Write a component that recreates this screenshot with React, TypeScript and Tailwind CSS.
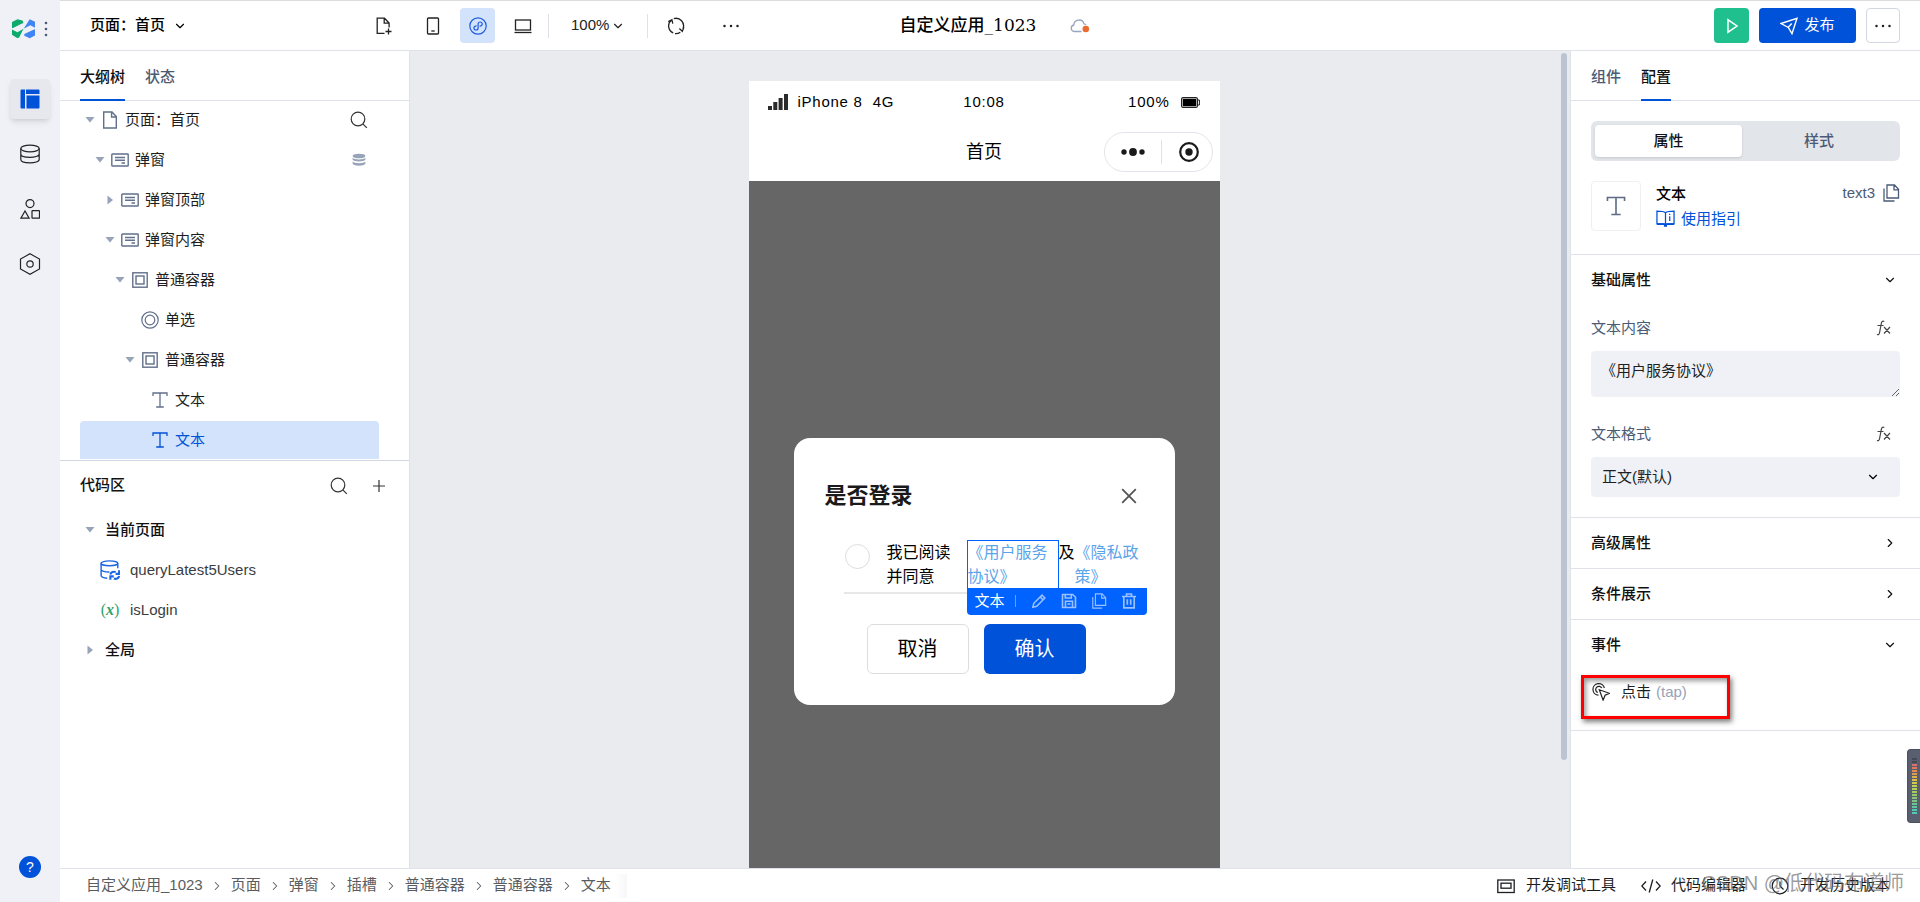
import React from "react";
import clsx from "clsx";
import { ChevronDown, ChevronRight } from "lucide-react";

type IconProps = { className?: string };

function Svg({ className, box = 20, sw = 1.2, children }: { className?: string; box?: number; sw?: number; children: React.ReactNode }) {
  return (
    <svg className={clsx("shrink-0", className)} viewBox={`0 0 ${box} ${box}`} fill="none" stroke="currentColor" strokeWidth={sw} aria-hidden>
      {children}
    </svg>
  );
}

/* ---------- icons ---------- */

const SearchIcon = ({ className }: IconProps) => (
  <Svg className={className} box={18}>
    <circle cx="8" cy="8" r="6.8" />
    <path d="M12.8 12.8l4 4" />
  </Svg>
);

const PageIcon = ({ className }: IconProps) => (
  <Svg className={className} box={18} sw={1.4}>
    <path d="M2.7 1h8.3l4.3 4.6V17H2.7zM10.6 1v5h4.7" />
  </Svg>
);

const SlotIcon = ({ className }: IconProps) => (
  <Svg className={className} box={18} sw={1.4}>
    <rect x=".8" y="3" width="16.4" height="12" rx=".6" />
    <path d="M4 6.5h10M4 9.3h10M10.5 12h3.5" />
  </Svg>
);

const BoxIcon = ({ className }: IconProps) => (
  <Svg className={className} box={18} sw={1.4}>
    <rect x="1.8" y="1.8" width="14.4" height="14.4" />
    <rect x="5" y="5" width="8" height="8" />
  </Svg>
);

const RadioIcon = ({ className }: IconProps) => (
  <Svg className={className} box={18} sw={1.2}>
    <circle cx="9" cy="9" r="8.2" />
    <circle cx="9" cy="9" r="4.8" />
  </Svg>
);

const TextIcon = ({ className }: IconProps) => (
  <Svg className={className} box={18} sw={1.3}>
    <path d="M2 5V2h14v3M9 2v14M5.2 16h7.6" />
  </Svg>
);

const StackIcon = ({ className }: IconProps) => (
  <svg className={clsx("shrink-0", className)} viewBox="0 0 14 14" fill="currentColor" aria-hidden>
    <ellipse cx="7" cy="3" rx="6.4" ry="2.3" />
    <path d="M.6 4.8c1.4 2.2 11.4 2.2 12.8 0v2c-1.4 2.3-11.4 2.3-12.8 0z" />
    <path d="M.6 8.6c1.4 2.2 11.4 2.2 12.8 0v2c-1.4 2.9-11.4 2.9-12.8 0z" />
  </svg>
);

const CopyIcon = ({ className }: IconProps) => (
  <Svg className={className} box={18} sw={1.3}>
    <path d="M5 1h7.5l4 4.2V14H5zM12 1v4.8h4.5M2 4.5V17h10.5" />
  </Svg>
);

const LogoIcon = ({ className }: IconProps) => (
  <svg className={clsx("shrink-0", className)} viewBox="0 0 24 20" aria-hidden>
    <path d="M0 3L5.500.3l5 1.300 1 2.400-2.500 1L1 9H0zM0 10.500l5.500 2.800 6-3.600L7 18.700 5 19 0 15.700z" fill="#0cab6c" />
    <path d="M11.700 9.700L17.700.2 23 2.800v6l-4.700-2.600zM12.300 15l9.700-4.400 1-.3v6.200L17.700 19.300l-5.400-2.500z" fill="#3f85f3" />
  </svg>
);

const LayoutIcon = ({ className }: IconProps) => (
  <svg className={clsx("shrink-0", className)} viewBox="0 0 20 20" fill="#0052d9" aria-hidden>
    <path d="M1.5.5H5v19H1.500a1 1 0 0 1-1-1v-17a1 1 0 0 1 1-1z" />
    <path d="M6 .5h12.500a1 1 0 0 1 1 1V5H6zM6.500 6.500h13v12a1 1 0 0 1-1 1h-12z" />
  </svg>
);

const DatabaseIcon = ({ className }: IconProps) => (
  <Svg className={className}>
    <ellipse cx="10" cy="4.500" rx="9.200" ry="3.300" />
    <path d="M.8 4.500v11c0 4.400 18.400 4.400 18.400 0v-11M.8 10c0 4.400 18.400 4.400 18.400 0" />
  </Svg>
);

const ShapesIcon = ({ className }: IconProps) => (
  <Svg className={className}>
    <circle cx="10" cy="4.600" r="4" />
    <path d="M5 12L.9 19.200h8.200z" />
    <rect x="12" y="11.700" width="7.500" height="7.500" rx=".5" />
  </Svg>
);

const HexIcon = ({ className }: IconProps) => (
  <Svg className={className} box={22}>
    <path d="M11 .8l9.500 5.200v10L11 21.200 1.500 16V6z" />
    <circle cx="11" cy="11" r="3.200" />
  </Svg>
);

const PageAddIcon = ({ className }: IconProps) => (
  <Svg className={className} box={18} sw={1.300}>
    <path d="M9.500 16.300H2.200V1.200h7.300l4.600 4.800v4.500M9.200 1.200v5h4.800M13.500 11.500v6M10.500 14.500h6" />
  </Svg>
);

const MobileIcon = ({ className }: IconProps) => (
  <Svg className={className} box={18} sw={1.300}>
    <rect x="3.500" y="1" width="11" height="16" rx="1" />
    <path d="M7.300 14h3.400" />
  </Svg>
);

const MiniProgramIcon = ({ className }: IconProps) => (
  <Svg className={className} box={18}>
    <circle cx="9" cy="9" r="8.200" />
    <path d="M10.600 9.200c1.500-.2 2.600-1 2.600-2.300 0-1.100-.9-1.900-2-1.900S9.100 5.900 9.100 7v4c0 1.100-.9 2-2.100 2s-2.100-.8-2.100-1.900c0-1.300 1.100-2.100 2.600-2.300" />
  </Svg>
);

const LaptopIcon = ({ className }: IconProps) => (
  <Svg className={className} box={18} sw={1.300}>
    <rect x="1.500" y="3" width="15" height="10" />
    <path d="M.5 15.500h17" />
  </Svg>
);

const RefreshIcon = ({ className }: IconProps) => (
  <Svg className={className} box={18} sw={1.300}>
    <path d="M6.200 15.900A7.600 7.600 0 0 1 4.600 2.900M1.300 4.600l3.600-1.900.9 4M6.800 1.600A7.600 7.600 0 0 1 16 11.700M8 16.600a7.600 7.600 0 0 0 5.300-1.400M16.900 10.200l-1.600 4.200-2.900-2.900" />
  </Svg>
);

const CloudIcon = ({ className }: IconProps) => (
  <svg className={clsx("shrink-0", className)} viewBox="0 0 20 16" fill="none" aria-hidden>
    <path d="M11.500 13.500H4.300a3.300 3.300 0 0 1-.5-6.500 5.200 5.200 0 0 1 10.200-1.200c.8.100 1.500.5 2 1.100" stroke="#99a5bd" strokeWidth="1.300" />
    <circle cx="15.800" cy="11" r="3.300" fill="#e86c30" />
  </svg>
);

const SendIcon = ({ className }: IconProps) => (
  <Svg className={className} box={18} sw={1.400}>
    <path d="M1 6.500L17 1.300l-5 15.400-3.700-6.300zM8.200 10.200l3.600-3.600" />
  </Svg>
);

const DotsIcon = ({ className }: IconProps) => (
  <svg className={clsx("shrink-0", className)} viewBox="0 0 18 18" fill="currentColor" aria-hidden>
    <circle cx="2.500" cy="9" r="1.250" />
    <circle cx="9" cy="9" r="1.250" />
    <circle cx="15.500" cy="9" r="1.250" />
  </svg>
);

const GuideIcon = ({ className }: IconProps) => (
  <Svg className={className} box={18} sw={1.200}>
    <path d="M9 3.500C7.500 2.200 4 2 .9 2v12H7l2 1.500L11 14h6.100V2C14 2 10.500 2.200 9 3.500zM9 3.500V15M13 6.800v4.500M13 4.600v1.200" />
    <path d="M1 14.300h16M7.500 15.800h3" strokeWidth="1.800" />
  </Svg>
);

const DataQueryIcon = ({ className }: IconProps) => (
  <Svg className={className} box={18} sw={1.300}>
    <ellipse cx="8.500" cy="3" rx="7.500" ry="2.200" />
    <path d="M1 3v11c0 1.300 2.500 2.200 5.500 2.400M16 3v4.500M1 8.500c0 1.400 3.500 2.400 7.500 2.300" />
    <path d="M9.300 13c.5-2 2.900-3 4.800-2.100M17.200 9.300v3.200h-3.200M17.300 14.500c-.5 2-2.900 3-4.800 2.100M9.300 17.800v-3.100h3.100" strokeWidth="1.900" />
  </Svg>
);

const TapIcon = ({ className }: IconProps) => (
  <Svg className={className} box={18} sw={1.200}>
    <path d="M6.500 12.200A5.800 5.800 0 1 1 12.400 5M5.800 9.500a3.200 3.200 0 1 1 4-4.400M7.300 6.800l10 3.500-4.200 2-2 4.800z" />
  </Svg>
);

const Caret = ({ open = true }: { open?: boolean }) => (
  <svg className="size-2.5 text-[#97a3b7]" viewBox="0 0 10 10" fill="currentColor" aria-hidden>
    {open ? <path d="M.5 2h9L5 7.500z" /> : <path d="M2.500.5v9L8 5z" />}
  </svg>
);

/* ---------- left side ---------- */

function SideNav() {
  const items = [
    { name: "设计", icon: <LayoutIcon className="size-5" /> },
    { name: "数据", icon: <DatabaseIcon className="size-5" /> },
    { name: "组件库", icon: <ShapesIcon className="size-5" /> },
    { name: "设置", icon: <HexIcon className="size-[22px]" /> },
  ];
  return (
    <nav className="flex w-[60px] shrink-0 flex-col items-center bg-[#f0f1f6] pb-6">
      <div className="flex h-[57px] w-full items-center gap-2 pl-3">
        <LogoIcon className="h-5 w-6" />
        <svg className="h-4 w-1 text-[#4b5b76]" viewBox="0 0 4 16" fill="currentColor" aria-hidden>
          <circle cx="2" cy="2" r="1.300" />
          <circle cx="2" cy="8" r="1.300" />
          <circle cx="2" cy="14" r="1.300" />
        </svg>
      </div>
      <div className="mt-[22px] flex flex-col gap-[15px]">
        {items.map((item, i) => (
          <button
            key={item.name}
            aria-label={item.name}
            className={clsx("flex size-10 items-center justify-center rounded-sm text-[#222]", i === 0 && "bg-[#e7e8ee] shadow-md")}
          >
            {item.icon}
          </button>
        ))}
      </div>
      <button aria-label="帮助" className="mt-auto flex size-[22px] items-center justify-center rounded-full bg-[#0052d9] text-sm text-white">
        ?
      </button>
    </nav>
  );
}

type TreeNode = { label: string; level: number; open?: boolean; icon: (p: IconProps) => React.ReactNode; selected?: boolean };

const tree: TreeNode[] = [
  { label: "页面：首页", level: 0, open: true, icon: PageIcon },
  { label: "弹窗", level: 1, open: true, icon: SlotIcon },
  { label: "弹窗顶部", level: 2, open: false, icon: SlotIcon },
  { label: "弹窗内容", level: 2, open: true, icon: SlotIcon },
  { label: "普通容器", level: 3, open: true, icon: BoxIcon },
  { label: "单选", level: 4, icon: RadioIcon },
  { label: "普通容器", level: 4, open: true, icon: BoxIcon },
  { label: "文本", level: 5, icon: TextIcon },
  { label: "文本", level: 5, icon: TextIcon, selected: true },
];

const indent = ["pl-0", "pl-[10px]", "pl-[20px]", "pl-[30px]", "pl-[40px]", "pl-[50px]"];

function PanelTab({ label, active = false }: { label: string; active?: boolean }) {
  return (
    <button className={clsx("-mb-px border-b-2 pt-1 font-medium", active ? "border-[#0052d9] text-[#111]" : "border-transparent text-[#4b5b76]")}>
      {label}
    </button>
  );
}

function OutlinePanel() {
  return (
    <aside className="flex w-[350px] shrink-0 flex-col border-r border-[#dfe2e8] bg-white">
      <div className="flex h-[50px] shrink-0 gap-5 border-b border-[#dfe2e8] px-5">
        <PanelTab label="大纲树" active />
        <PanelTab label="状态" />
      </div>

      <ul className="mr-[30px] ml-5 flex flex-col gap-0.5 pb-px">
        {tree.map((node, i) => {
          const Icon = node.icon;
          return (
            <li
              key={i}
              className={clsx("flex h-[38px] items-center rounded-t-sm pr-2.5", node.selected ? "bg-[#d3e3fc] text-[#0052d9]" : "text-[#1c1e22]")}
            >
              <div className={clsx("flex flex-1 items-center", indent[node.level])}>
                <span className="flex w-5 justify-center">{node.open !== undefined && <Caret open={node.open} />}</span>
                <span className={clsx("mr-[5px] flex w-5 justify-center", !node.selected && "text-[#62708a]")}>
                  <Icon className="size-[18px]" />
                </span>
                {node.label}
              </div>
              {i === 0 && (
                <button aria-label="搜索" className="flex w-5 justify-center text-[#333]">
                  <SearchIcon className="size-[18px]" />
                </button>
              )}
              {i === 1 && (
                <span className="flex w-5 justify-center text-[#97a3b7]">
                  <StackIcon className="size-3.5" />
                </span>
              )}
            </li>
          );
        })}
      </ul>

      <div className="border-t border-[#d3d7e2]">
        <div className="flex h-[49px] items-center pr-5 pl-5">
          <h2 className="flex-1 font-medium text-[#111]">代码区</h2>
          <button aria-label="搜索代码" className="mr-5 flex size-5 items-center justify-center text-[#333]">
            <SearchIcon className="size-[18px]" />
          </button>
          <button aria-label="新建" className="flex size-5 items-center justify-center text-[#333]">
            <Svg className="size-3" box={12}>
              <path d="M6 0v12M0 6h12" />
            </Svg>
          </button>
        </div>
        <ul className="pl-5 text-[#1c1e22]">
          <li className="flex h-10 items-center gap-[5px] font-medium text-[#111]">
            <span className="flex w-5 justify-center"><Caret /></span>
            当前页面
          </li>
          <li className="flex h-10 items-center gap-2.5 pl-5 text-[#3a3d42]">
            <DataQueryIcon className="size-5 text-[#1f66e5]" />
            queryLatest5Users
          </li>
          <li className="flex h-10 items-center gap-2.5 pl-5 text-[#3a3d42]">
            <span className="w-5 text-center font-[Liberation_Serif] text-base text-[#30a46c]">(<b><i>x</i></b>)</span>
            isLogin
          </li>
          <li className="flex h-10 items-center gap-[5px] font-medium text-[#111]">
            <span className="flex w-5 justify-center"><Caret open={false} /></span>
            全局
          </li>
        </ul>
      </div>
    </aside>
  );
}

/* ---------- top bar ---------- */

function TopBar() {
  const iconBtn = "flex size-[35px] items-center justify-center rounded-sm text-[#222]";
  return (
    <header className="grid h-[51px] shrink-0 grid-cols-[1fr_auto_1fr] items-center border-t border-b border-t-[#dcdcdc] border-b-[#dfe2e8] bg-white pr-5 pl-[30px]">
      <div className="flex items-center">
        <button className="flex w-[276px] items-center gap-2 font-medium text-black">
          页面：首页
          <ChevronDown className="size-3.5" strokeWidth={2} />
        </button>
        <button aria-label="新建页面" className={clsx(iconBtn, "mr-3.5")}><PageAddIcon className="size-[18px]" /></button>
        <div className="flex gap-2.5">
          <button aria-label="手机" className={iconBtn}><MobileIcon className="size-[18px]" /></button>
          <button aria-label="小程序" className="flex size-[35px] items-center justify-center rounded-sm bg-[#d3e3fc] text-[#1d5be0]">
            <MiniProgramIcon className="size-[18px]" />
          </button>
          <button aria-label="电脑" className={iconBtn}><LaptopIcon className="size-[18px]" /></button>
        </div>
        <span className="mr-[22px] ml-2 h-6 w-px bg-[#dfe2e8]" />
        <button className="flex items-center gap-0.5 text-[#222]">
          100%
          <ChevronDown className="size-3.5" strokeWidth={2} />
        </button>
        <span className="mr-2.5 ml-[22px] h-6 w-px bg-[#dfe2e8]" />
        <button aria-label="刷新" className={clsx(iconBtn, "mr-5")}><RefreshIcon className="size-[18px]" /></button>
        <button aria-label="更多" className={iconBtn}><DotsIcon className="size-[18px]" /></button>
      </div>

      <div className="flex items-center gap-[34px]">
        <h1 className="font-['DejaVu_Serif','Noto_Sans_CJK_SC',serif] text-[17px] font-medium text-black">自定义应用_1023</h1>
        <CloudIcon className="h-4 w-5" />
      </div>

      <div className="flex justify-end gap-2.5">
        <button aria-label="预览" className="flex size-[35px] items-center justify-center rounded-sm bg-[#1fc08e] text-white">
          <Svg className="size-4" box={16} sw={1.500}>
            <path d="M4 1.800v12.400L13 8z" />
          </Svg>
        </button>
        <button className="flex h-[35px] w-[97px] items-center justify-center gap-1.5 rounded-sm bg-[#0052d9] text-white">
          <SendIcon className="size-[18px]" />
          发布
        </button>
        <button aria-label="更多操作" className="flex h-[35px] w-[34px] items-center justify-center rounded-sm border border-[#d3d7e2] text-[#222]">
          <DotsIcon className="size-[18px]" />
        </button>
      </div>
    </header>
  );
}

/* ---------- canvas ---------- */

function SelectionToolbar() {
  const btn = "flex w-[30px] justify-center text-white/60";
  return (
    <div className="absolute top-full -left-px flex h-[27px] w-[180px] items-center rounded-b-sm bg-[#0062ff] pl-2 text-[15px] text-white">
      <span className="w-10">文本</span>
      <span className="mr-2 h-3 w-px bg-white/40" />
      <button aria-label="编辑" className={btn}>
        <Svg className="size-4" box={16} sw={1.500}>
          <path d="M1.800 14.200l1-3.900 8.200-8.200 2.900 2.900-8.200 8.200zM9.200 4l2.900 2.900" />
        </Svg>
      </button>
      <button aria-label="保存" className={btn}>
        <Svg className="size-4" box={16} sw={1.600}>
          <path d="M1.500 1.500h10.200l2.800 2.800v10.200h-13zM4.300 1.500V5h6V1.500M4.500 14.500V8.300h7v6.200M6.500 11h3" />
        </Svg>
      </button>
      <button aria-label="复制" className={btn}>
        <CopyIcon className="size-4" />
      </button>
      <button aria-label="删除" className={btn}>
        <Svg className="size-4" box={16} sw={1.700}>
          <path d="M1 3.500h14M5.500 3V1h5v2M2.800 3.500v11.300h10.400V3.500M6.300 6.300v5.500M9.700 6.300v5.500" />
        </Svg>
      </button>
    </div>
  );
}

function LoginDialog() {
  return (
    <div className="h-[267px] w-[381px] rounded-2xl bg-white px-[31px] pt-11 text-black">
      <div className="flex h-7 items-center justify-between pr-[7px]">
        <h3 className="text-[22px] font-bold text-[#1a1a1a]">是否登录</h3>
        <button aria-label="关闭" className="text-[#555]">
          <Svg className="size-4" box={16} sw={1.800}>
            <path d="M1.200 1.200l13.600 13.600M14.800 1.200L1.200 14.800" />
          </Svg>
        </button>
      </div>
      <div className="mt-[30px] ml-[19px] flex h-[54px] text-base leading-6">
        <label className="flex w-[123px] items-start border-b-2 border-[#e7e7e7] pt-px">
          <input type="radio" name="agree" className="mt-[3px] mr-[17px] ml-px size-[25px] shrink-0 appearance-none rounded-full border border-[#ddd]" />
          <span className="w-16">我已阅读并同意</span>
        </label>
        <div className="relative h-12 w-[92px] border border-b-0 border-[#0062ff] text-[#5ba4ea]">
          <a href="#service">《用户服务协议》</a>
          <SelectionToolbar />
        </div>
        <span className="w-4 pt-px">及</span>
        <a href="#privacy" className="w-16 pt-px text-[#5ba4ea]">《隐私政策》</a>
      </div>
      <div className="mt-[30px] ml-[42px] flex gap-[15px] text-xl">
        <button className="h-[50px] w-[102px] rounded-md border border-[#ddd]">取消</button>
        <button className="h-[50px] w-[102px] rounded-md bg-[#0052d9] text-white">确认</button>
      </div>
    </div>
  );
}

function Phone() {
  return (
    <div className="w-[471px] shrink-0">
      <div className="h-[100px] bg-white text-black">
        <div className="grid h-[42px] grid-cols-3 items-center px-[19px] text-[15px] tracking-wider">
          <div className="flex items-center gap-2.5">
            <svg className="h-4 w-5" viewBox="0 0 20 16" fill="#2b2b2b" aria-hidden>
              <path d="M0 12h4v4H0zM5.300 8h4v8h-4zM10.600 4h4v12h-4zM16 0h4v16h-4z" />
            </svg>
            <span className="whitespace-nowrap">iPhone 8</span>
            <span>4G</span>
          </div>
          <span className="text-center">10:08</span>
          <div className="flex items-center justify-end gap-3">
            <span>100%</span>
            <svg className="h-[11px] w-[19px]" viewBox="0 0 19 11" aria-hidden>
              <rect x=".6" y=".6" width="15.800" height="9.800" rx="1.500" fill="none" stroke="#222" strokeWidth="1.200" />
              <rect x="1.800" y="1.800" width="13.400" height="7.400" />
              <path d="M17 3h1.400v5H17" fill="none" stroke="#222" />
            </svg>
          </div>
        </div>
        <div className="grid h-[58px] grid-cols-[1fr_auto_1fr] items-center px-[7px]">
          <span />
          <span className="text-lg">首页</span>
          <div className="flex h-10 w-[109px] items-center justify-self-end rounded-full border border-[#e4e4ec] text-[#1a1a1a]">
            <button aria-label="菜单" className="flex w-14 justify-center">
              <svg className="h-2 w-6" viewBox="0 0 24 8" fill="currentColor" aria-hidden>
                <circle cx="3" cy="4" r="2.700" />
                <circle cx="12" cy="4" r="3.900" />
                <circle cx="21" cy="4" r="2.700" />
              </svg>
            </button>
            <span className="h-6 w-px bg-[#e0e0e8]" />
            <button aria-label="退出" className="flex flex-1 justify-center pl-1">
              <Svg className="size-5" sw={2.200}>
                <circle cx="10" cy="10" r="8.800" />
                <circle cx="10" cy="10" r="3.700" fill="currentColor" stroke="none" />
              </Svg>
            </button>
          </div>
        </div>
      </div>
      <div className="flex h-[780px] items-center justify-center bg-[#666]">
        <LoginDialog />
      </div>
    </div>
  );
}

function Canvas() {
  return (
    <main className="flex min-w-0 flex-1 overflow-hidden bg-[#eaebef]">
      <div className="flex flex-1 justify-center pt-[30px]">
        <Phone />
      </div>
      <div className="flex w-3 justify-center pt-0.5">
        <div className="h-[707px] w-1.5 rounded-full bg-[#bbc4d0]" />
      </div>
    </main>
  );
}

/* ---------- right side ---------- */

function SectionTitle({ title, open = false }: { title: string; open?: boolean }) {
  return (
    <button className="flex h-[50px] w-full items-center justify-between pr-[3px] font-medium text-[#111]">
      {title}
      {open ? <ChevronDown className="size-3.5" strokeWidth={2} /> : <ChevronRight className="size-3.5" strokeWidth={2} />}
    </button>
  );
}

function FieldLabel({ id, text }: { id: string; text: string }) {
  return (
    <div className="flex h-[22px] items-center justify-between pr-2 text-[#4b5b76]">
      <label htmlFor={id}>{text}</label>
      <button aria-label={`${text} 表达式`} className="text-[#444]">
        <Svg className="size-4" box={16} sw={1.200}>
          <path d="M8.300 1.500C6.200.6 5.500 2 5.200 4L3.600 12.500C3.200 14.500 2.200 15 1 14.500M1.500 5.500h6M8 7l6 6.500M14 7l-6 6.500" />
        </Svg>
      </button>
    </div>
  );
}

function ConfigPanel() {
  return (
    <aside className="relative w-[350px] shrink-0 border-l border-[#dfe2e8] bg-white">
      <div className="flex h-[50px] gap-5 border-b border-[#dfe2e8] px-5">
        <PanelTab label="组件" />
        <PanelTab label="配置" active />
      </div>

      <div className="border-b border-[#dfe2e8] px-5 pt-5 pb-[23px]">
        <div className="flex h-10 rounded-md bg-[#e2e5ea] p-1">
          <button className="w-[147px] rounded-sm bg-white font-medium text-[#111] shadow-sm">属性</button>
          <button className="flex-1 font-medium text-[#4b5b76]">样式</button>
        </div>
        <div className="mt-5 flex">
          <div className="flex size-[50px] items-center justify-center rounded-sm border border-[#eef0f3] text-[#5c6a84]">
            <TextIcon className="size-[22px]" />
          </div>
          <div className="ml-[15px] flex-1 leading-[25px]">
            <div className="font-medium text-black">文本</div>
            <a href="#guide" className="flex items-center gap-1.5 text-[#0052d9]">
              <GuideIcon className="size-[19px]" />
              使用指引
            </a>
          </div>
          <div className="flex h-6 items-center gap-[7px] text-[#4b5b76]">
            text3
            <button aria-label="复制名称"><CopyIcon className="size-[18px]" /></button>
          </div>
        </div>
      </div>

      <section className="border-b border-[#dfe2e8] px-5 pb-5">
        <SectionTitle title="基础属性" open />
        <div className="mt-3">
          <FieldLabel id="content" text="文本内容" />
          <textarea id="content" defaultValue="《用户服务协议》" className="mt-3 block h-[46px] w-full rounded-sm bg-[#f0f1f6] px-2.5 py-2 leading-6 text-[#1c1e22]" />
        </div>
        <div className="mt-[26px]">
          <FieldLabel id="format" text="文本格式" />
          <div className="relative mt-3">
            <select id="format" className="block h-10 w-full appearance-none rounded-sm bg-[#f0f1f6] pl-[11px] text-[#1c1e22]">
              <option>正文(默认)</option>
            </select>
            <ChevronDown className="pointer-events-none absolute top-[13px] right-5 size-3.5" strokeWidth={2} />
          </div>
        </div>
      </section>

      <section className="border-b border-[#dfe2e8] px-5"><SectionTitle title="高级属性" /></section>
      <section className="border-b border-[#dfe2e8] px-5"><SectionTitle title="条件展示" /></section>
      <section className="border-b border-[#dfe2e8] px-5 pb-[11px]">
        <SectionTitle title="事件" open />
        <div className="mt-[5px] -ml-2.5 h-11 w-[149px] border-3 border-[#f00] shadow-[2px_3px_5px_rgba(0,0,0,0.5),inset_2px_3px_5px_rgba(0,0,0,0.4)]">
          <button className="flex h-7 items-center pl-2">
            <TapIcon className="mr-[11px] size-[18px] text-[#222]" />
            <span className="text-[#1c1e22]">点击</span>
            <span className="ml-[5px] text-[#97a3b7]">(tap)</span>
          </button>
        </div>
      </section>

      <LevelMeter />
    </aside>
  );
}

const meterColors = ["#444a55", "#444a55", "#d8716b", "#dd7a5e", "#e08a55", "#e39a4e", "#dcb04e", "#d8be4c", "#d2c84c", "#c4cf52", "#b4d058", "#a5cd62", "#96cb6c", "#88c877", "#7cc583", "#6fc490", "#60c69d", "#52c8ac", "#4fcbb8"];

function LevelMeter() {
  return (
    <div className="absolute right-0 bottom-[45px] flex h-[74px] w-[13px] flex-col items-center gap-px rounded-l-sm border border-r-0 border-[#4b505e] bg-[#5a5f6f] pt-2">
      {meterColors.map((color, i) => (
        <span key={i} className="h-0.5 w-[5px]" style={{ backgroundColor: color }} />
      ))}
    </div>
  );
}

/* ---------- footer ---------- */

const crumbs = ["自定义应用_1023", "页面", "弹窗", "插槽", "普通容器", "普通容器", "文本"];

function Footer() {
  return (
    <footer className="relative flex h-[34px] shrink-0 items-center border-t border-[#dfe2e8] bg-white pr-[30px] pl-[26px]">
      <ol className="flex flex-1 items-center text-[#5a5c60]">
        {crumbs.map((crumb, i) => (
          <li key={i} className="flex items-center">
            {i > 0 && <ChevronRight className="mx-[7px] size-3.5" strokeWidth={1.800} />}
            {crumb}
          </li>
        ))}
        <li aria-hidden className="ml-1 h-6 w-3 bg-linear-to-r from-white to-[#f6f7f9]" />
      </ol>
      <div className="flex items-center gap-[25px] text-[#1c1e22]">
        <button className="flex items-center gap-[11px]">
          <Svg className="size-[18px]" box={18} sw={1.300}>
            <rect x=".8" y="3" width="16.400" height="12.500" />
            <rect x="4" y="6.200" width="10" height="5" />
          </Svg>
          开发调试工具
        </button>
        <button className="flex items-center gap-2.5">
          <Svg className="size-5" sw={1.300}>
            <path d="M5 5.500L.8 10 5 14.500M15 5.500l4.200 4.500-4.200 4.500M11.800 3.500l-3.600 13" />
          </Svg>
          代码编辑器
        </button>
        <button className="flex items-center gap-[11px]">
          <Svg className="size-[18px]" box={18}>
            <circle cx="9" cy="9" r="7.800" />
            <path d="M9 4.500V9l3.500 3.500" />
          </Svg>
          开发历史版本
        </button>
      </div>
      <span className="absolute top-0 right-4 text-xl leading-7 text-[#707070]/70">CSDN @低代码布道师</span>
    </footer>
  );
}

export default function App() {
  return (
    <div className="flex h-screen bg-white font-['Liberation_Sans','Noto_Sans_CJK_SC',sans-serif] text-[15px]">
      <SideNav />
      <div className="flex min-w-0 flex-1 flex-col">
        <TopBar />
        <div className="flex min-h-0 flex-1">
          <OutlinePanel />
          <Canvas />
          <ConfigPanel />
        </div>
        <Footer />
      </div>
    </div>
  );
}
